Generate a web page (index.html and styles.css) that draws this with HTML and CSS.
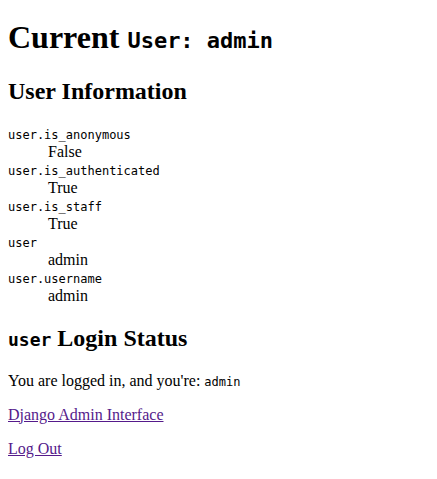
FILE: index.html
```html
<!DOCTYPE html>
<html>
<head>
<meta charset="utf-8">
<title>Current User</title>
<link rel="stylesheet" href="styles.css">
</head>
<body>
<h1 class="title">Current <code class="code-h1">User: admin</code></h1>
<h2 class="section">User Information</h2>
<dl class="info">
  <dt><code class="code-sm">user.is_anonymous</code></dt>
  <dd>False</dd>
  <dt><code class="code-sm">user.is_authenticated</code></dt>
  <dd>True</dd>
  <dt><code class="code-sm">user.is_staff</code></dt>
  <dd>True</dd>
  <dt><code class="code-sm">user</code></dt>
  <dd>admin</dd>
  <dt><code class="code-sm">user.username</code></dt>
  <dd>admin</dd>
</dl>
<h2 class="section"><code class="code-h2">user</code> Login Status</h2>
<p class="para">You are logged in, and you're: <code class="code-sm">admin</code></p>
<p class="para"><a class="link" href="#admin">Django Admin Interface</a></p>
<p class="para"><a class="link" href="#logout">Log Out</a></p>
</body>
</html>
```

FILE: styles.css
```css
body {
  margin: 8px;
  font-family: "Liberation Serif", "Times New Roman", serif;
  font-size: 16px;
  color: #000;
  background: #fff;
}
.title {
  font-size: 32px;
  margin: 11.44px 0 21.44px;
}
.section {
  font-size: 24px;
  margin: 19.92px 0;
}
.info {
  margin: 16px 0;
}
.info dd {
  margin-left: 40px;
}
.para {
  margin: 16px 0;
}
.code-h1,
.code-h2,
.code-sm {
  font-family: "DejaVu Sans Mono", monospace;
  font-weight: normal;
}
.code-h1 {
  font-size: 22px;
  font-weight: bold;
}
.code-h2 {
  font-size: 18px;
  font-weight: bold;
}
.code-sm {
  font-size: 12px;
}
.link {
  color: #551a8b;
  text-decoration: underline;
}
```
